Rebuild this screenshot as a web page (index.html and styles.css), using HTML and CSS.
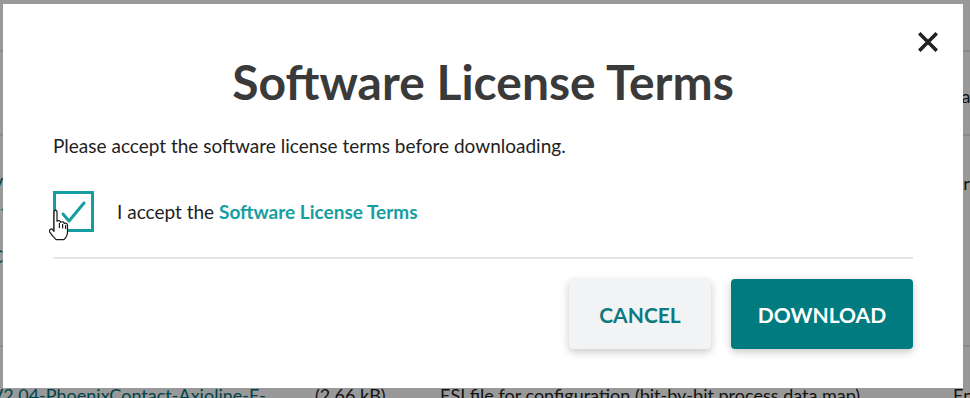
FILE: index.html
```html
<!DOCTYPE html>
<html lang="en">
<head>
<meta charset="utf-8">
<title>Software License Terms</title>
<link rel="stylesheet" href="styles.css">
</head>
<body>
<div class="page">
  <div class="row row-a">
    <span class="cell c1 link">Download</span>
    <span class="cell c2"></span>
    <span class="cell c3"></span>
    <span class="cell c4"></span>
  </div>
  <div class="row row-b">
    <span class="cell c1 link"></span>
    <span class="cell c2"></span>
    <span class="cell c3"></span>
    <span class="cell c4">ca</span>
  </div>
  <div class="row row-c">
    <span class="cell c1 link">V2<br>e-Config<br>-<br>C</span>
    <span class="cell c2"></span>
    <span class="cell c3"></span>
    <span class="cell c4">Er</span>
  </div>
  <div class="row row-d">
    <span class="cell c1 link">V2 04-PhoenixContact-Axioline-E-</span>
    <span class="cell c2">(2.66 kB)</span>
    <span class="cell c3">ESI file for configuration (bit-by-bit process data map)</span>
    <span class="cell c4">En</span>
  </div>
</div>

<div class="overlay"></div>

<div class="modal" role="dialog" aria-labelledby="modal-title">
  <button class="close" aria-label="Close">
    <svg width="20" height="20" viewBox="0 0 20 20"><path d="M2.5 2.5 L17.5 17.5 M17.5 2.5 L2.5 17.5" stroke="#222" stroke-width="3.6" stroke-linecap="square" fill="none"/></svg>
  </button>
  <h1 id="modal-title" class="title">Software License Terms</h1>
  <p class="intro">Please accept the software license terms before downloading.</p>
  <label class="accept">
    <span class="box">
      <svg width="35" height="35" viewBox="0 0 35 35"><path d="M7 20 L13 27 L28 9" stroke="#159ea2" stroke-width="3" fill="none" stroke-linecap="round" stroke-linejoin="round"/></svg>
      <svg class="cursor" width="22" height="34" viewBox="0 0 22 34"><path d="M6 1.2 c1.1 0 2 0.9 2 2 v9 c0.7-0.6 1.6-0.8 2.4-0.5 c0.7 0.3 1.2 0.9 1.3 1.6 c0.6-0.5 1.5-0.7 2.3-0.4 c0.7 0.3 1.1 0.9 1.2 1.6 c0.6-0.4 1.4-0.5 2.1-0.2 c0.8 0.4 1.2 1.1 1.2 1.9 v6.5 c0 3.2-1.6 6.2-3.8 8 h-7.6 c-1.6-1.6-4.4-4.8-6.3-7.6 c-0.6-0.9-0.4-2.1 0.4-2.7 c0.9-0.6 2-0.4 2.6 0.4 l1.2 1.5 v-19.1 c0-1.1 0.9-2 2-2 z M10.4 14 v5 M13.6 15 v4.5 M16.6 16 v4" fill="#fff" stroke="#1a1a1a" stroke-width="1.2" stroke-linejoin="round"/></svg>
    </span>
    <span class="accept-text">I accept the <a class="terms" href="#">Software License Terms</a></span>
  </label>
  <hr class="divider">
  <div class="actions">
    <button class="btn btn-cancel">Cancel</button>
    <button class="btn btn-download">Download</button>
  </div>
</div>
</body>
</html>
```
FILE: styles.css
```css
* { box-sizing: border-box; }

html, body {
  margin: 0;
  padding: 0;
  width: 970px;
  height: 398px;
  overflow: hidden;
  background: #fff;
  font-family: Lato, "Liberation Sans", sans-serif;
  color: #222;
}

/* background page */
.page {
  margin-top: -18px;
}
.row {
  display: grid;
  grid-template-columns: 324px 125px 513px 200px;
  margin-left: -9px;
  border-bottom: 2px solid #e6e6e6;
  font-size: 18px;
  line-height: 22px;
}
.row-a { height: 70px; }
.row-b { height: 84px; padding-top: 33px; }
.row-c { height: 211px; padding-top: 36px; }
.row-d { height: 60px; padding-top: 37px; border-bottom: 0; }
.row-c .c1 { line-height: 24px; }
.cell { white-space: nowrap; }
.link { color: #00707a; }

.overlay {
  position: fixed;
  inset: 0;
  background: rgba(0, 0, 0, 0.4);
}

/* modal */
.modal {
  position: absolute;
  left: 3px;
  top: 4px;
  width: 960px;
  height: 384px;
  background: #fff;
  padding: 47px 50px 39px;
  display: flex;
  flex-direction: column;
}

.close {
  position: absolute;
  top: 28px;
  right: 25px;
  width: 20px;
  height: 20px;
  padding: 0;
  border: 0;
  background: none;
  cursor: pointer;
}
.close svg { display: block; }

.title {
  margin: 0;
  text-align: center;
  font-size: 48px;
  line-height: 62px;
  font-weight: 700;
  color: #3a3a3a;
}

.intro {
  margin: 21px 0 0;
  font-size: 19px;
  line-height: 24px;
  color: #222;
}

.accept {
  display: flex;
  align-items: center;
  gap: 23px;
  margin-top: 33px;
  font-size: 19px;
  color: #222;
}
.box {
  position: relative;
  width: 41px;
  height: 41px;
  border: 3px solid #159ea2;
  flex: none;
}
.box svg { display: block; }
.box .cursor {
  position: absolute;
  left: -7px;
  top: 15px;
}
.terms {
  color: #159ea2;
  font-weight: 700;
  text-decoration: none;
}

.divider {
  margin: 25px 0 0;
  border: 0;
  height: 2px;
  background: #e3e5e8;
}

.actions {
  display: flex;
  justify-content: flex-end;
  gap: 20px;
  margin-top: 20px;
}
.btn {
  height: 70px;
  border: 0;
  border-radius: 4px;
  font-family: inherit;
  font-size: 21px;
  font-weight: 700;
  text-transform: uppercase;
  box-shadow: 0 3px 8px rgba(0, 0, 0, 0.22);
  cursor: pointer;
}
.btn-cancel {
  width: 142px;
  background: #f2f3f5;
  color: #0d7a80;
}
.btn-download {
  width: 182px;
  background: #007b80;
  color: #fff;
}
```
